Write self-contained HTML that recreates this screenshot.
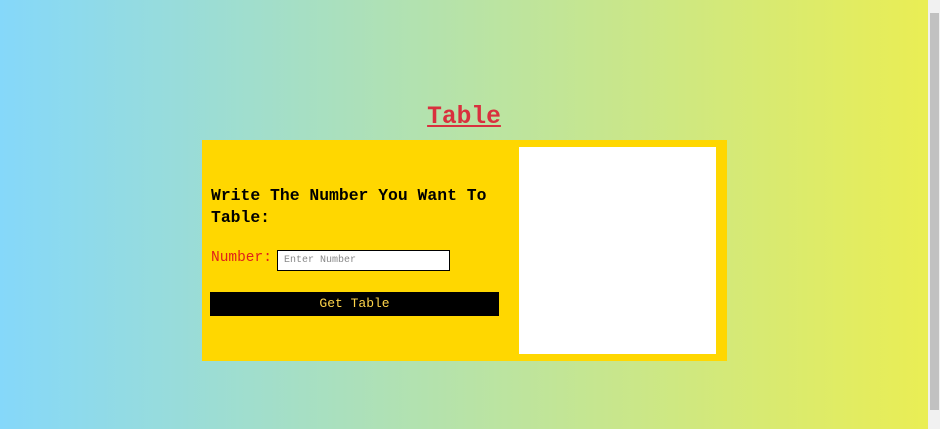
<!DOCTYPE html>
<html><head><style>
html,body{margin:0;padding:0;width:940px;height:429px;overflow:hidden;}
body{background:linear-gradient(to right,#85d8fa,#ebee52);position:relative;font-family:"Liberation Mono",monospace;}
.sb{position:absolute;left:928px;top:0;width:12px;height:429px;background:#f1f1f1;}
.thumb{position:absolute;left:930px;top:13px;width:9px;height:397px;background:#c1c1c1;}
h1{position:absolute;left:0;width:928px;top:101px;margin:0;text-align:center;font-size:24.6px;color:#d9303e;text-decoration:underline;font-weight:bold;line-height:34px;}
.card{position:absolute;left:202px;top:140px;width:525px;height:221px;background:#ffd700;}
.white{position:absolute;left:317px;top:7px;width:197px;height:207px;background:#fff;}
.q{position:absolute;left:9px;top:45px;font-size:16.4px;font-weight:bold;line-height:22px;color:#000;margin:0;}
.lab{position:absolute;left:9px;top:110px;font-size:14.5px;color:#e0201a;}
.inp{position:absolute;left:75px;top:110px;background:#fff;border:1px solid #000;font-size:10px;color:#888;line-height:19px;padding-left:6px;box-sizing:border-box;width:173px;height:21px;}
.btn{position:absolute;left:8px;top:152px;width:289px;height:24px;background:#000;color:#ffd54a;font-size:13px;text-align:center;line-height:24px;}
</style></head><body>
<h1>Table</h1>
<div class="card">
<div class="q">Write The Number You Want To<br>Table:</div>
<div class="lab">Number:</div>
<div class="inp">Enter Number</div>
<div class="btn">Get Table</div>
<div class="white"></div>
</div>
<div class="sb"></div><div class="thumb"></div>
</body></html>
